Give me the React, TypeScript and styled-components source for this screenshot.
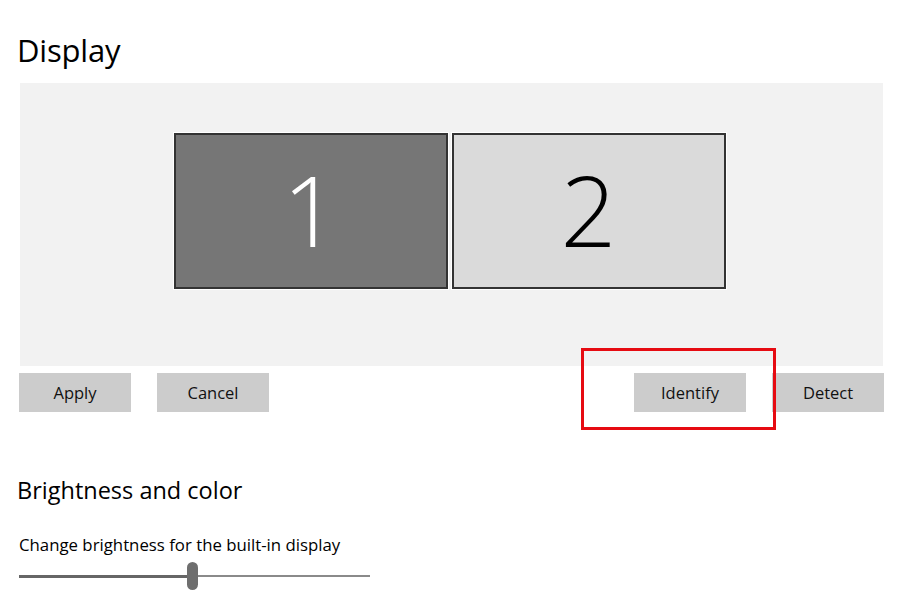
import * as React from 'react';
import styled, { createGlobalStyle } from 'styled-components';

const GlobalStyle = createGlobalStyle`
    body {
        margin: 0;
        background: #ffffff;
        font-family: "Open Sans", "Noto Sans", sans-serif;
        color: #000000;
    }
`

const Page = styled.div`
    width: 897px;
    height: 593px;
    overflow: hidden;
    padding-left: 17px;
    box-sizing: border-box;
`

const Title = styled.h1`
    margin: 0;
    padding-top: 28px;
    font-size: 31px;
    font-weight: 400;
    line-height: 44px;
    letter-spacing: -0.2px;
`

const Arrangement = styled.div`
    margin-top: 11px;
    margin-left: 3px;
    width: 863px;
    height: 283px;
    background: #f2f2f2;
    display: flex;
    justify-content: center;
    align-items: flex-start;
    gap: 4px;
    padding-top: 50px;
    padding-right: 4px;
    box-sizing: border-box;
`

const Monitor = styled.div<{ active: boolean }>`
    width: 274px;
    height: 156px;
    box-sizing: border-box;
    border: 2px solid #333333;
    outline: 1px solid #ffffff;
    background: ${props => props.active ? "#767676" : "#dadada"};
    color: ${props => props.active ? "#ffffff" : "#000000"};
    display: flex;
    align-items: center;
    justify-content: center;
    font-size: 98px;
    font-weight: 300;
    line-height: 1;
    padding-bottom: 4px;
`

const ButtonRow = styled.div`
    display: flex;
    gap: 26px;
    margin-top: 7px;
    margin-left: 2px;
    width: 865px;
`

const Button = styled.button`
    width: 112px;
    height: 39px;
    border: none;
    border-radius: 0;
    background: #cccccc;
    font-family: "Open Sans", "Noto Sans", sans-serif;
    font-size: 16.5px;
    color: #111111;
    padding: 0 0 1px;
`

const Spacer = styled.div`
    flex: 1;
`

const Highlight = styled.div`
    position: relative;
    display: flex;
`

const RedBox = styled.div`
    position: absolute;
    left: -53px;
    top: -25px;
    width: 195px;
    height: 82px;
    box-sizing: border-box;
    border: 3px solid #e60b12;
    pointer-events: none;
`

const Section = styled.h2`
    margin: 0;
    margin-top: 63px;
    font-size: 23.5px;
    font-weight: 400;
    line-height: 30px;
`

const Label = styled.div`
    margin-top: 29px;
    margin-left: 2px;
    font-size: 16.8px;
    line-height: 22px;
`

const Slider = styled.div`
    margin-left: 2px;
    margin-top: 6px;
    width: 351px;
    height: 28px;
    display: flex;
    align-items: center;
`

const Track = styled.div<{ filled: boolean }>`
    height: ${props => props.filled ? "3px" : "2px"};
    background: ${props => props.filled ? "#666666" : "#8a8a8a"};
`

const Thumb = styled.div`
    width: 11px;
    height: 28px;
    border-radius: 6px;
    background: #6e6e6e;
    flex-shrink: 0;
`

export default function App() {
    const brightness = 0.48;
    return (
        <Page>
            <GlobalStyle />
            <Title>Display</Title>
            <Arrangement>
                <Monitor active>1</Monitor>
                <Monitor active={false}>2</Monitor>
            </Arrangement>
            <ButtonRow>
                <Button>Apply</Button>
                <Button>Cancel</Button>
                <Spacer />
                <Highlight>
                    <Button>Identify</Button>
                    <RedBox />
                </Highlight>
                <Button>Detect</Button>
            </ButtonRow>
            <Section>Brightness and color</Section>
            <Label>Change brightness for the built-in display</Label>
            <Slider>
                <Track filled style={{ width: `${brightness * 100}%` }} />
                <Thumb />
                <Track filled={false} style={{ flex: 1 }} />
            </Slider>
        </Page>
    )
}
